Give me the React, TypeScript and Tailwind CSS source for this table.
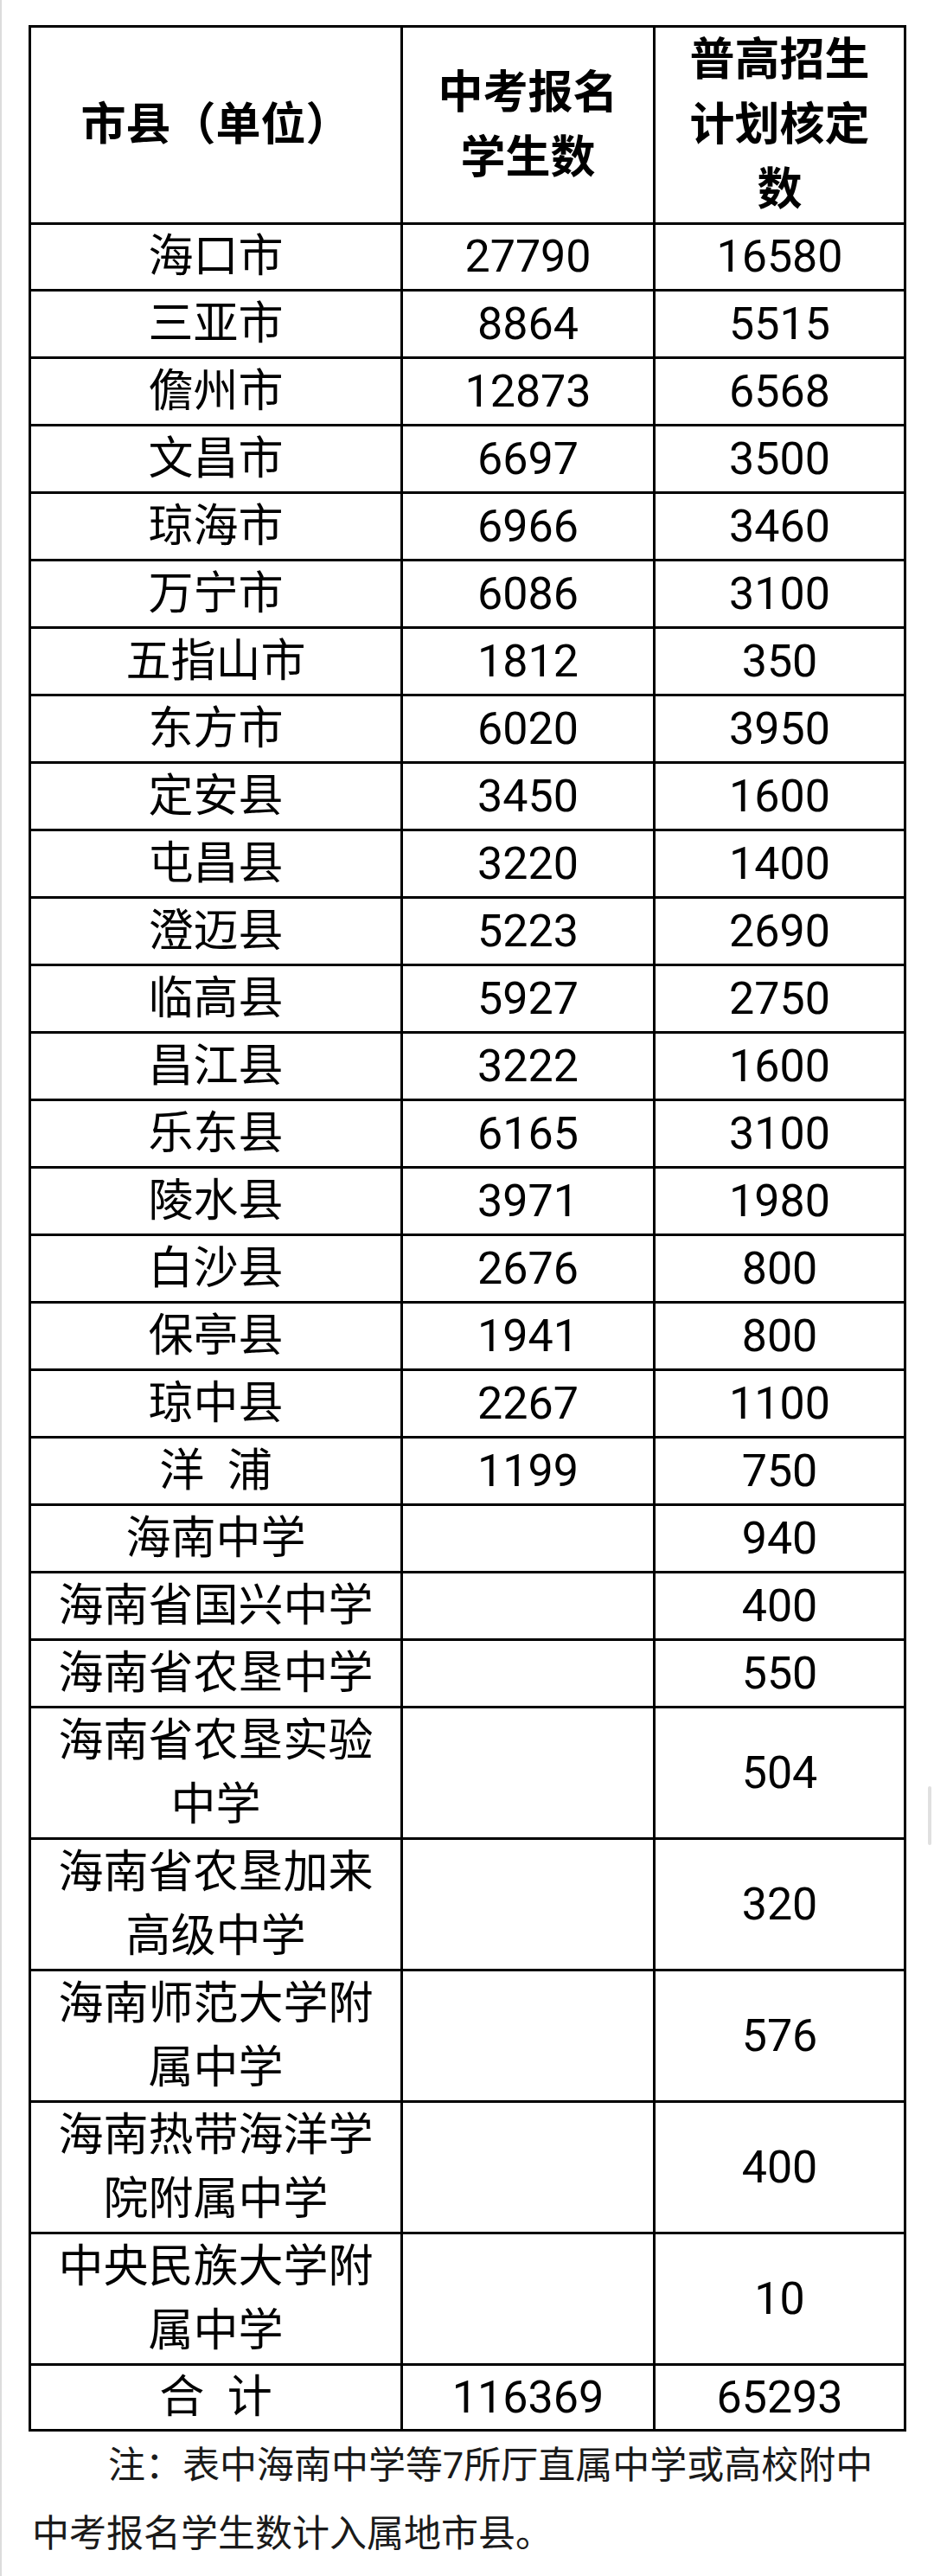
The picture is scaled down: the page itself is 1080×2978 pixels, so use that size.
import React from 'react'

interface Row {
  name: string[]
  applicants?: string
  quota: string
}

const rows: Row[] = [
  { name: ['海口市'], applicants: '27790', quota: '16580' },
  { name: ['三亚市'], applicants: '8864', quota: '5515' },
  { name: ['儋州市'], applicants: '12873', quota: '6568' },
  { name: ['文昌市'], applicants: '6697', quota: '3500' },
  { name: ['琼海市'], applicants: '6966', quota: '3460' },
  { name: ['万宁市'], applicants: '6086', quota: '3100' },
  { name: ['五指山市'], applicants: '1812', quota: '350' },
  { name: ['东方市'], applicants: '6020', quota: '3950' },
  { name: ['定安县'], applicants: '3450', quota: '1600' },
  { name: ['屯昌县'], applicants: '3220', quota: '1400' },
  { name: ['澄迈县'], applicants: '5223', quota: '2690' },
  { name: ['临高县'], applicants: '5927', quota: '2750' },
  { name: ['昌江县'], applicants: '3222', quota: '1600' },
  { name: ['乐东县'], applicants: '6165', quota: '3100' },
  { name: ['陵水县'], applicants: '3971', quota: '1980' },
  { name: ['白沙县'], applicants: '2676', quota: '800' },
  { name: ['保亭县'], applicants: '1941', quota: '800' },
  { name: ['琼中县'], applicants: '2267', quota: '1100' },
  { name: ['洋\u2002浦'], applicants: '1199', quota: '750' },
  { name: ['海南中学'], quota: '940' },
  { name: ['海南省国兴中学'], quota: '400' },
  { name: ['海南省农垦中学'], quota: '550' },
  { name: ['海南省农垦实验', '中学'], quota: '504' },
  { name: ['海南省农垦加来', '高级中学'], quota: '320' },
  { name: ['海南师范大学附', '属中学'], quota: '576' },
  { name: ['海南热带海洋学', '院附属中学'], quota: '400' },
  { name: ['中央民族大学附', '属中学'], quota: '10' },
]

const grid = 'grid grid-cols-[430px_292px_290px]'
const cell =
  'flex flex-col items-center justify-center text-center border-r-[3px] border-b-[3px] border-black'

function DataRow({ row }: { row: Row }) {
  const tall = row.name.length > 1
  return (
    <div className={`${grid} ${tall ? 'h-[152px]' : 'h-[78px]'}`}>
      <div className={`${cell} leading-[74px]`}>
        {row.name.map((line) => (
          <span key={line}>{line}</span>
        ))}
      </div>
      <div className={cell}>{row.applicants}</div>
      <div className={cell}>{row.quota}</div>
    </div>
  )
}

export default function App() {
  return (
    <div
      className="relative w-[1080px] min-h-[2978px] bg-white border-l-2 border-[#dcdcdc] pt-[29px] pl-[31px] text-black"
      style={{ fontFamily: 'Roboto, "Noto Sans CJK SC", sans-serif' }}
    >
      <div className="w-[1015px] border-t-[3px] border-l-[3px] border-black text-[52px] leading-none">
        {/* 表头 */}
        <div className={`${grid} h-[227px] font-bold leading-[75px]`}>
          <div className={cell}>市县（单位）</div>
          <div className={cell}>
            <span>中考报名</span>
            <span>学生数</span>
          </div>
          <div className={cell}>
            <span>普高招生</span>
            <span>计划核定</span>
            <span>数</span>
          </div>
        </div>

        {rows.map((row) => (
          <DataRow key={row.name.join('')} row={row} />
        ))}

        <div className={`${grid} h-[76px]`}>
          <div className={cell}>合{'\u2002'}计</div>
          <div className={cell}>116369</div>
          <div className={cell}>65293</div>
        </div>
      </div>

      <p className="w-[1015px] pl-[4px] text-[43px] leading-[79px] indent-[88px] text-[#1a1a1a]">
        注：表中海南中学等7所厅直属中学或高校附中
        <br />
        中考报名学生数计入属地市县。
      </p>

      {/* 滚动条 */}
      <div className="absolute left-[1071px] top-[2065px] h-[68px] w-[4px] rounded-full bg-[#e0e0e0]" />
    </div>
  )
}
